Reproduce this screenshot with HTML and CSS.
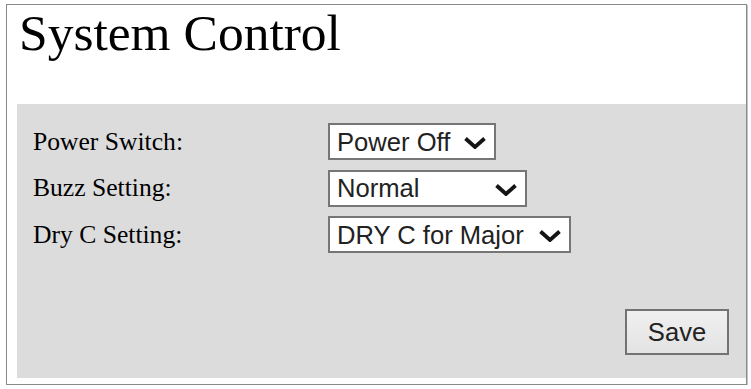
FILE: index.html
```html
<!DOCTYPE html>
<html lang="en">
<head>
<meta charset="utf-8">
<title>System Control</title>
<link rel="stylesheet" href="styles.css">
</head>
<body>
<div class="frame">
  <h1 class="title">System Control</h1>
  <form class="panel">
    <div class="rows">
      <label class="label" for="power">Power Switch:</label>
      <span class="select-wrap w-power">
        <select id="power" class="select">
          <option>Power Off</option>
          <option>Power On</option>
        </select>
        <svg class="chev" viewBox="0 0 22 12" aria-hidden="true"><polyline points="1.5,1.5 11,10 20.5,1.5"/></svg>
      </span>

      <label class="label" for="buzz">Buzz Setting:</label>
      <span class="select-wrap w-buzz">
        <select id="buzz" class="select">
          <option>Normal</option>
          <option>Silent</option>
        </select>
        <svg class="chev" viewBox="0 0 22 12" aria-hidden="true"><polyline points="1.5,1.5 11,10 20.5,1.5"/></svg>
      </span>

      <label class="label" for="dryc">Dry C Setting:</label>
      <span class="select-wrap w-dry">
        <select id="dryc" class="select">
          <option>DRY C for Major</option>
          <option>DRY C for Minor</option>
        </select>
        <svg class="chev" viewBox="0 0 22 12" aria-hidden="true"><polyline points="1.5,1.5 11,10 20.5,1.5"/></svg>
      </span>
    </div>
    <div class="actions">
      <button type="button" class="btn">Save</button>
    </div>
  </form>
</div>
</body>
</html>
```
FILE: styles.css
```css
html, body {
  margin: 0;
  padding: 0;
  background: #ffffff;
}

body {
  font-family: "Liberation Serif", "Times New Roman", serif;
  color: #000;
}

.frame {
  box-sizing: border-box;
  width: 741px;
  height: 381px;
  margin: 4px 0 0 6px;
  border: 1px solid #8a8a8a;
  box-shadow: 1px 1px 0 #c4c4c4;
  padding: 0 0 6px 10px;
  display: flex;
  flex-direction: column;
  background: #fff;
}

.title {
  margin: 0;
  padding: 0 0 0 2px;
  height: 99px;
  box-sizing: border-box;
  font-family: "Liberation Serif", "Times New Roman", serif;
  font-weight: normal;
  font-size: 51.5px;
  line-height: 56px;
  color: #000;
}

.panel {
  flex: 1;
  margin: 0;
  background: #dcdcdc;
  padding: 19px 17px 23px 16px;
  display: flex;
  flex-direction: column;
}

.rows {
  display: grid;
  grid-template-columns: 295px auto;
  row-gap: 9.5px;
  align-items: center;
  justify-items: start;
}

.label {
  font-size: 25.6px;
  line-height: 30px;
  color: #000;
}

.select-wrap {
  position: relative;
  display: inline-block;
  height: 37px;
}

.w-power { width: 168px; }
.w-buzz { width: 199px; }
.w-dry { width: 243px; }

.select {
  appearance: none;
  -webkit-appearance: none;
  box-sizing: border-box;
  width: 100%;
  height: 37px;
  margin: 0;
  padding: 0 0 0 7px;
  border: 2px solid #767676;
  border-radius: 0;
  background: #ffffff;
  font-family: "Liberation Sans", Arial, sans-serif;
  font-size: 25.6px;
  color: #222222;
}

.chev {
  position: absolute;
  right: 10px;
  top: 14px;
  width: 22px;
  height: 12px;
  fill: none;
  stroke: #141414;
  stroke-width: 3.8;
  stroke-linecap: butt;
  stroke-linejoin: miter;
  pointer-events: none;
}

.actions {
  margin-top: auto;
  display: flex;
  justify-content: flex-end;
}

.btn {
  box-sizing: border-box;
  width: 104px;
  height: 46px;
  margin: 0;
  padding: 0;
  border: 2px solid #737373;
  border-radius: 0;
  background: linear-gradient(#f0f0f0, #e3e3e3);
  font-family: "Liberation Sans", Arial, sans-serif;
  font-size: 25.6px;
  color: #222222;
}
```
